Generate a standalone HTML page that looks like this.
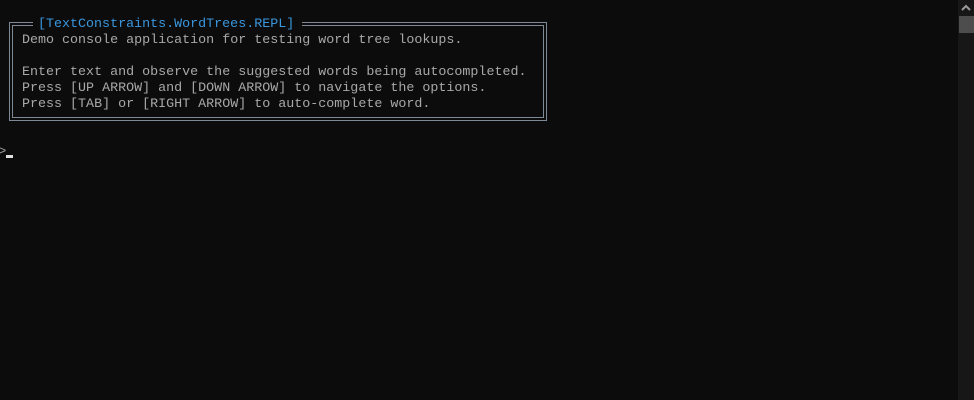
<!DOCTYPE html>
<html><head><style>
body{margin:0;width:974px;height:400px;background:#0c0c0c;overflow:hidden;position:relative;font-family:"Liberation Mono",monospace;font-size:13.35px;color:#a8a8a8}
.l{position:absolute;background:#7d8a96}
.t{position:absolute;white-space:pre;line-height:16px}
</style></head><body>
<div class="l" style="left:9px;top:22px;width:1px;height:99px"></div>
<div class="l" style="left:12px;top:25px;width:1px;height:93px"></div>
<div class="l" style="left:546px;top:22px;width:1px;height:99px"></div>
<div class="l" style="left:543px;top:25px;width:1px;height:93px"></div>
<div class="l" style="left:9px;top:120px;width:538px;height:1px"></div>
<div class="l" style="left:12px;top:117px;width:532px;height:1px"></div>
<div class="l" style="left:9px;top:22px;width:24px;height:1px"></div>
<div class="l" style="left:12px;top:25px;width:21px;height:1px"></div>
<div class="l" style="left:302px;top:22px;width:245px;height:1px"></div>
<div class="l" style="left:302px;top:25px;width:242px;height:1px"></div>
<div class="t" style="left:38px;top:17px;color:#3a96dd">[TextConstraints.WordTrees.REPL]</div>
<div class="t" style="left:22px;top:33px">Demo console application for testing word tree lookups.

Enter text and observe the suggested words being autocompleted.
Press [UP ARROW] and [DOWN ARROW] to navigate the options.
Press [TAB] or [RIGHT ARROW] to auto-complete word.</div>
<div class="t" style="left:-2px;top:144px;color:#999;font-size:14px">&gt;</div>
<div style="position:absolute;left:6px;top:155px;width:7px;height:3px;background:#e0e0e0"></div>
<div style="position:absolute;left:958px;top:0;width:16px;height:400px;background:#171717"></div>
<svg style="position:absolute;left:958px;top:0" width="16" height="16"><path d="M4 10 L8 6 L12 10" stroke="#9a9a9a" stroke-width="2" fill="none"/></svg>
<div style="position:absolute;left:959px;top:16px;width:15px;height:17px;background:#4d4d4d"></div>
</body></html>
